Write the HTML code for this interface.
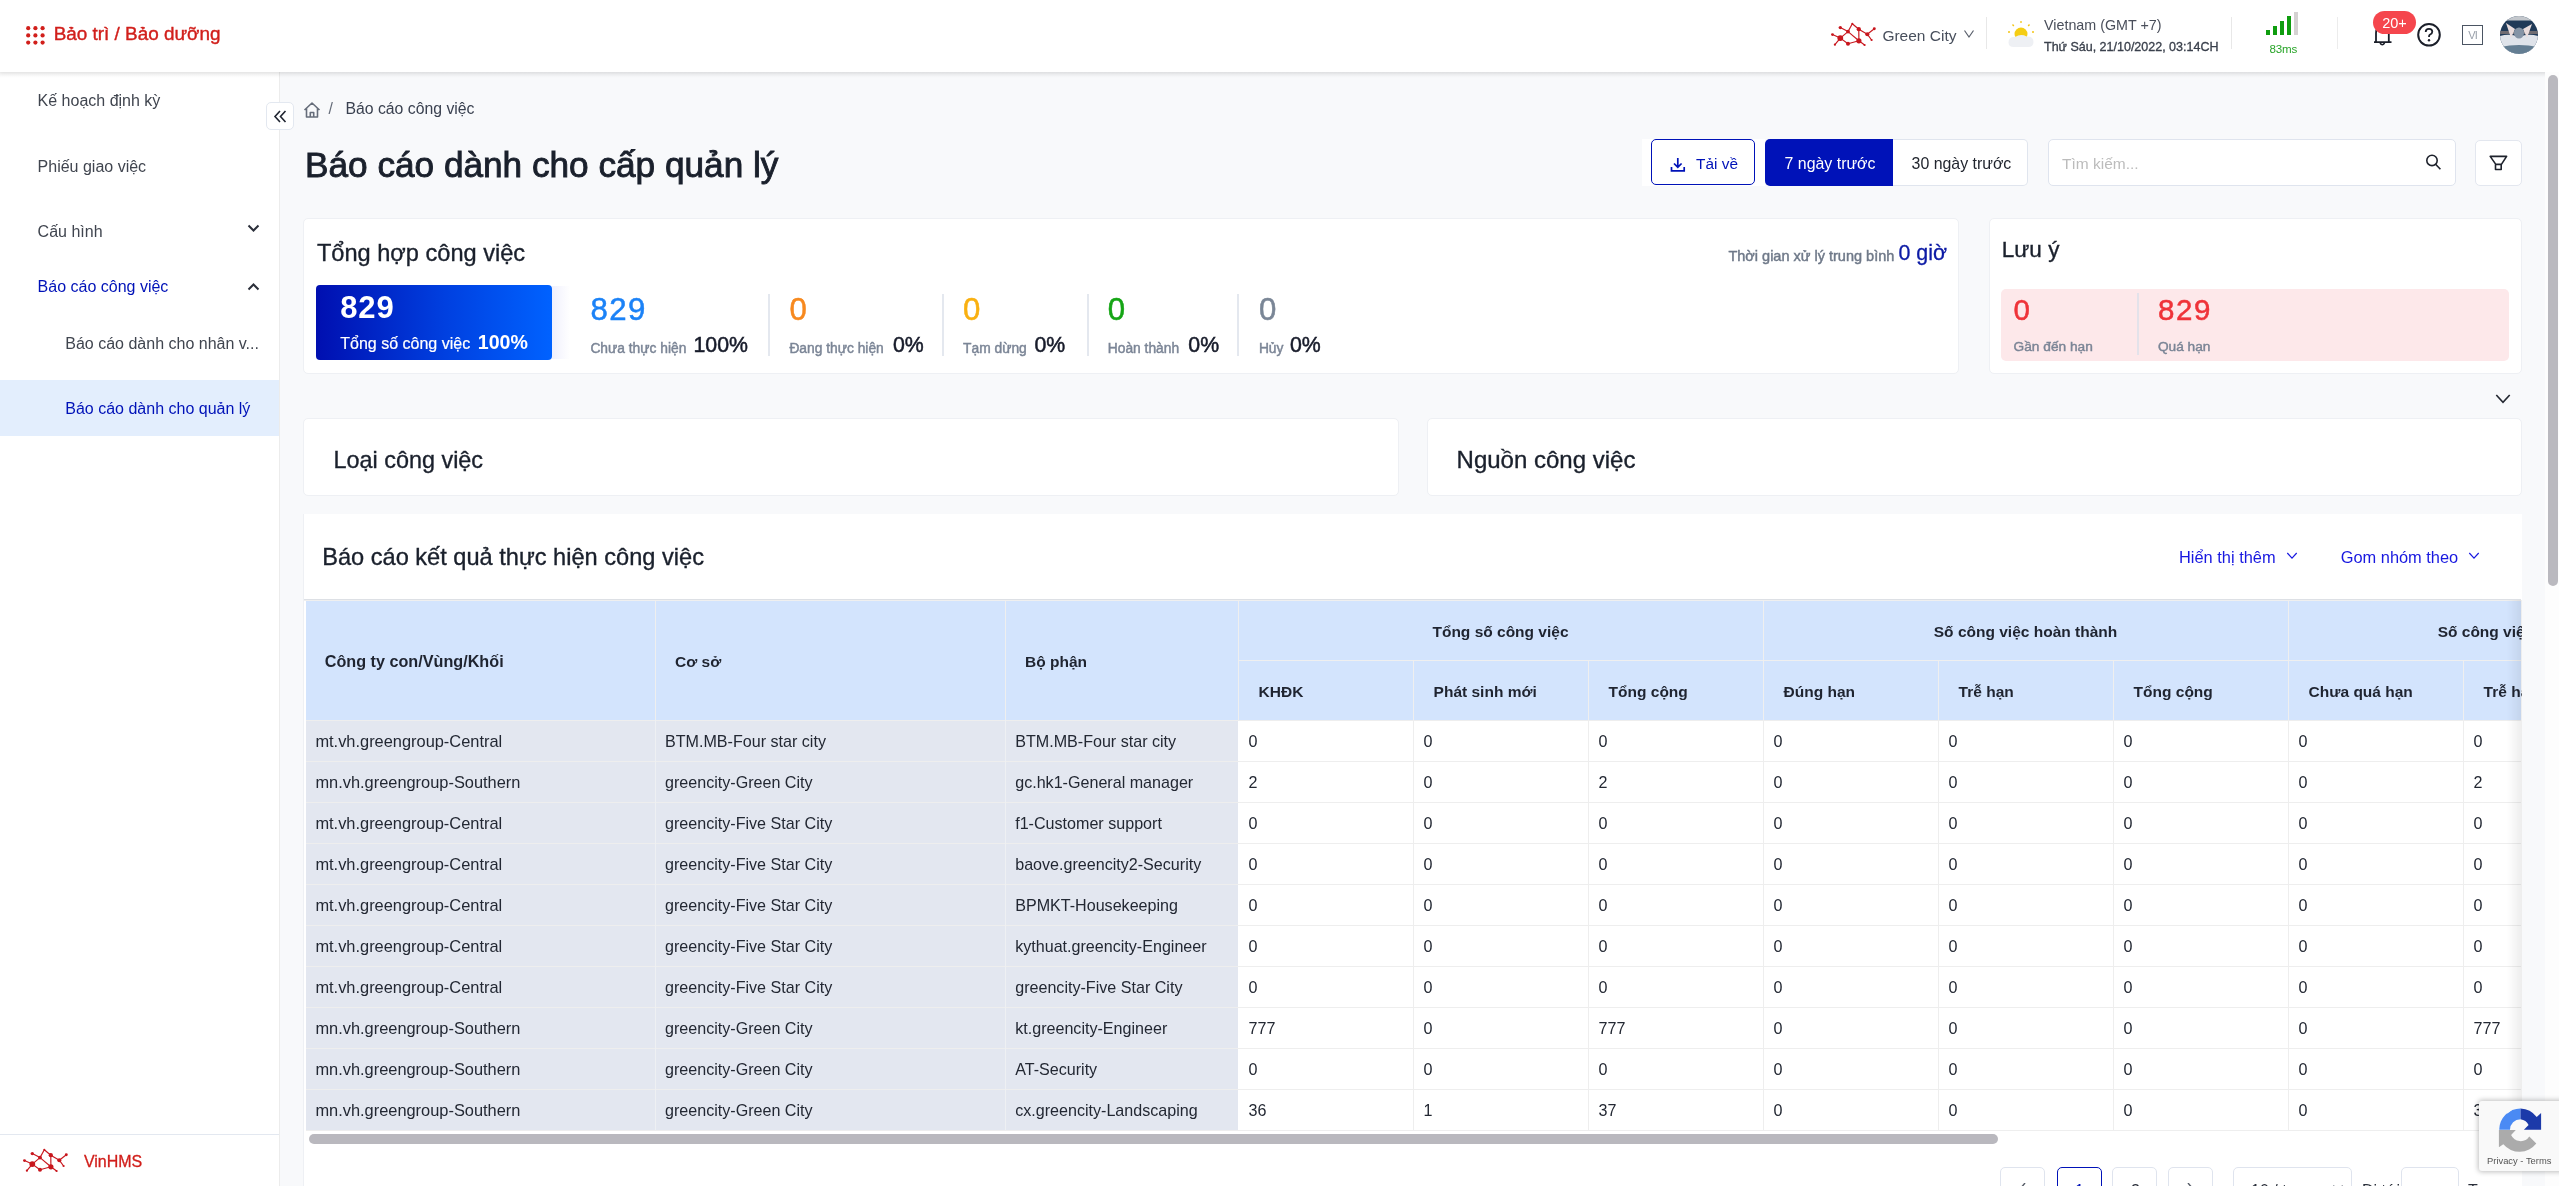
<!DOCTYPE html>
<html><head><meta charset="utf-8"><title>Báo cáo dành cho cấp quản lý</title>
<style>
html,body{margin:0;padding:0;width:2559px;height:1186px;overflow:hidden;background:#fff;font-family:"Liberation Sans",sans-serif;}
#root{position:absolute;left:0;top:0;width:2559px;height:1186px;overflow:hidden;will-change:transform}
.r{position:absolute;box-sizing:content-box}
.t{position:absolute;line-height:1;white-space:nowrap}
</style></head><body>
<div id="root">
<div class="r" style="left:280px;top:72px;width:2265px;height:1114px;background:#f8f9fb"></div>
<div class="r" style="left:0px;top:72px;width:279px;height:1114px;background:#fff"></div>
<div class="r" style="left:279px;top:72px;width:1px;height:1114px;background:#ececec"></div>
<div class="r" style="left:0px;top:380px;width:279px;height:56px;background:#e3eefd"></div>
<div class="t" style="left:37.6px;top:92.5px;font-size:16px;color:#40454f;font-weight:400;">Kế hoạch định kỳ</div>
<div class="t" style="left:37.6px;top:158.5px;font-size:16px;color:#40454f;font-weight:400;">Phiếu giao việc</div>
<div class="t" style="left:37.6px;top:224.0px;font-size:16px;color:#40454f;font-weight:400;">Cấu hình</div>
<div class="t" style="left:37.6px;top:279.3px;font-size:16px;color:#0012b8;font-weight:400;">Báo cáo công việc</div>
<div class="t" style="left:65.3px;top:335.8px;font-size:16px;color:#40454f;font-weight:400;">Báo cáo dành cho nhân v...</div>
<div class="t" style="left:65.3px;top:400.9px;font-size:16px;color:#0012b8;font-weight:400;">Báo cáo dành cho quản lý</div>
<svg class="r" style="left:247px;top:223px" width="13" height="11" viewBox="0 0 13 11"><path d="M1.5 2.5 L6.5 7.5 L11.5 2.5" fill="none" stroke="#2b2f3a" stroke-width="2"/></svg>
<svg class="r" style="left:247px;top:281px" width="13" height="11" viewBox="0 0 13 11"><path d="M1.5 8.5 L6.5 3.5 L11.5 8.5" fill="none" stroke="#2b2f3a" stroke-width="2"/></svg>
<div class="r" style="left:0px;top:1134px;width:279px;height:1px;background:#e3e8f0"></div>
<svg class="r" style="left:17.9px;top:1144.4px" width="54" height="32" viewBox="0 0 54 32"><line x1="14.3" y1="9.6" x2="22" y2="13.6" stroke="#c8161d" stroke-width="1.15"/><line x1="22" y1="13.6" x2="26.3" y2="5.8" stroke="#c8161d" stroke-width="1.15"/><line x1="26.3" y1="5.8" x2="32.8" y2="11.2" stroke="#c8161d" stroke-width="1.15"/><line x1="32.8" y1="11.2" x2="41.3" y2="16.2" stroke="#c8161d" stroke-width="1.15"/><line x1="41.3" y1="16.2" x2="48.3" y2="10.8" stroke="#c8161d" stroke-width="1.15"/><line x1="41.3" y1="16.2" x2="45.6" y2="22" stroke="#c8161d" stroke-width="1.15"/><line x1="32.8" y1="11.2" x2="32.9" y2="22.8" stroke="#c8161d" stroke-width="1.15"/><line x1="22" y1="13.6" x2="32.9" y2="22.8" stroke="#c8161d" stroke-width="1.15"/><line x1="22" y1="13.6" x2="14.3" y2="20.1" stroke="#c8161d" stroke-width="1.15"/><line x1="6.5" y1="16.6" x2="14.3" y2="20.1" stroke="#c8161d" stroke-width="1.15"/><line x1="14.3" y1="20.1" x2="8.9" y2="26.7" stroke="#c8161d" stroke-width="1.15"/><line x1="14.3" y1="20.1" x2="22" y2="25.8" stroke="#c8161d" stroke-width="1.15"/><line x1="22" y1="25.8" x2="32.9" y2="22.8" stroke="#c8161d" stroke-width="1.15"/><line x1="32.9" y1="22.8" x2="38.6" y2="27" stroke="#c8161d" stroke-width="1.15"/><circle cx="14.3" cy="9.6" r="1.68" fill="#c8161d"/><circle cx="22" cy="13.6" r="1.90" fill="#c8161d"/><circle cx="26.3" cy="5.8" r="1.01" fill="#c8161d"/><circle cx="32.8" cy="11.2" r="2.13" fill="#c8161d"/><circle cx="48.3" cy="10.8" r="1.46" fill="#c8161d"/><circle cx="41.3" cy="16.2" r="2.02" fill="#c8161d"/><circle cx="45.6" cy="22" r="1.12" fill="#c8161d"/><circle cx="6.5" cy="16.6" r="1.46" fill="#c8161d"/><circle cx="14.3" cy="20.1" r="2.91" fill="#c8161d"/><circle cx="8.9" cy="26.7" r="1.12" fill="#c8161d"/><circle cx="22" cy="25.8" r="2.02" fill="#c8161d"/><circle cx="32.9" cy="22.8" r="2.58" fill="#c8161d"/><circle cx="38.6" cy="27" r="1.12" fill="#c8161d"/></svg>
<div class="t" style="left:83.9px;top:1154.1px;font-size:16px;color:#d11f1b;font-weight:400;-webkit-text-stroke:0.3px #d11f1b;">VinHMS</div>
<div class="r" style="left:266px;top:102px;width:26px;height:26px;background:#fff;border:1px solid #e3e8f0;border-radius:5px"></div>
<svg class="r" style="left:266px;top:102px" width="28" height="28" viewBox="0 0 28 28"><path d="M14 9 L9 14.5 L14 20 M19.5 9 L14.5 14.5 L19.5 20" fill="none" stroke="#1f2430" stroke-width="1.6"/></svg>
<div class="r" style="left:0px;top:0px;width:2559px;height:72px;background:#fff;box-shadow:0 1px 4px rgba(0,0,0,0.08)"></div>
<div class="r" style="left:0;top:72px;width:2559px;height:6px;background:linear-gradient(rgba(0,0,0,0.06),rgba(0,0,0,0))"></div>
<svg class="r" style="left:0;top:0" width="60" height="60"><circle cx="28.2" cy="28.2" r="2.1" fill="#d11f1b"/><circle cx="35.4" cy="28.2" r="2.1" fill="#d11f1b"/><circle cx="42.6" cy="28.2" r="2.1" fill="#d11f1b"/><circle cx="28.2" cy="35.4" r="2.1" fill="#d11f1b"/><circle cx="35.4" cy="35.4" r="2.1" fill="#d11f1b"/><circle cx="42.6" cy="35.4" r="2.1" fill="#d11f1b"/><circle cx="28.2" cy="42.6" r="2.1" fill="#d11f1b"/><circle cx="35.4" cy="42.6" r="2.1" fill="#d11f1b"/><circle cx="42.6" cy="42.6" r="2.1" fill="#d11f1b"/></svg>
<div class="t" style="left:53.7px;top:25.3px;font-size:18.9px;color:#d11f1b;font-weight:400;-webkit-text-stroke:0.4px #d11f1b;">Bảo trì / Bảo dưỡng</div>
<svg class="r" style="left:1826px;top:18px" width="54" height="32" viewBox="0 0 54 32"><line x1="14.3" y1="9.6" x2="22" y2="13.6" stroke="#c8161d" stroke-width="1.15"/><line x1="22" y1="13.6" x2="26.3" y2="5.8" stroke="#c8161d" stroke-width="1.15"/><line x1="26.3" y1="5.8" x2="32.8" y2="11.2" stroke="#c8161d" stroke-width="1.15"/><line x1="32.8" y1="11.2" x2="41.3" y2="16.2" stroke="#c8161d" stroke-width="1.15"/><line x1="41.3" y1="16.2" x2="48.3" y2="10.8" stroke="#c8161d" stroke-width="1.15"/><line x1="41.3" y1="16.2" x2="45.6" y2="22" stroke="#c8161d" stroke-width="1.15"/><line x1="32.8" y1="11.2" x2="32.9" y2="22.8" stroke="#c8161d" stroke-width="1.15"/><line x1="22" y1="13.6" x2="32.9" y2="22.8" stroke="#c8161d" stroke-width="1.15"/><line x1="22" y1="13.6" x2="14.3" y2="20.1" stroke="#c8161d" stroke-width="1.15"/><line x1="6.5" y1="16.6" x2="14.3" y2="20.1" stroke="#c8161d" stroke-width="1.15"/><line x1="14.3" y1="20.1" x2="8.9" y2="26.7" stroke="#c8161d" stroke-width="1.15"/><line x1="14.3" y1="20.1" x2="22" y2="25.8" stroke="#c8161d" stroke-width="1.15"/><line x1="22" y1="25.8" x2="32.9" y2="22.8" stroke="#c8161d" stroke-width="1.15"/><line x1="32.9" y1="22.8" x2="38.6" y2="27" stroke="#c8161d" stroke-width="1.15"/><circle cx="14.3" cy="9.6" r="1.68" fill="#c8161d"/><circle cx="22" cy="13.6" r="1.90" fill="#c8161d"/><circle cx="26.3" cy="5.8" r="1.01" fill="#c8161d"/><circle cx="32.8" cy="11.2" r="2.13" fill="#c8161d"/><circle cx="48.3" cy="10.8" r="1.46" fill="#c8161d"/><circle cx="41.3" cy="16.2" r="2.02" fill="#c8161d"/><circle cx="45.6" cy="22" r="1.12" fill="#c8161d"/><circle cx="6.5" cy="16.6" r="1.46" fill="#c8161d"/><circle cx="14.3" cy="20.1" r="2.91" fill="#c8161d"/><circle cx="8.9" cy="26.7" r="1.12" fill="#c8161d"/><circle cx="22" cy="25.8" r="2.02" fill="#c8161d"/><circle cx="32.9" cy="22.8" r="2.58" fill="#c8161d"/><circle cx="38.6" cy="27" r="1.12" fill="#c8161d"/></svg>
<div class="t" style="left:1882.4px;top:27.7px;font-size:15.5px;color:#484f5c;font-weight:400;">Green City</div>
<svg class="r" style="left:1963px;top:29px" width="12" height="10" viewBox="0 0 12 10"><path d="M1.5 1.5 L6 8 L10.5 1.5" fill="none" stroke="#5a606c" stroke-width="1.2"/></svg>
<div class="r" style="left:1986px;top:17px;width:1px;height:32px;background:#e8e8e8"></div>
<svg class="r" style="left:2006px;top:19px" width="30" height="30" viewBox="0 0 30 30"><g stroke="#f3c515" stroke-width="1.3"><line x1="15" y1="2" x2="15" y2="4"/><line x1="6.5" y1="5.5" x2="7.8" y2="7"/><line x1="23.5" y1="5.5" x2="22.2" y2="7"/><line x1="2" y1="13" x2="4" y2="13"/><line x1="26" y1="13" x2="28" y2="13"/></g><circle cx="15" cy="15" r="6.5" fill="#f5cd14"/><path d="M2.5 23.5 Q2.5 17.5 9 18 Q15 14.5 20.5 17.5 Q27.5 17 27.5 23 Q27.5 28 22 28 L8 28 Q2.5 28 2.5 23.5 Z" fill="#eef0f4"/></svg>
<div class="t" style="left:2044.0px;top:17.9px;font-size:14.3px;color:#4a4f5b;font-weight:400;">Vietnam (GMT +7)</div>
<div class="t" style="left:2044.0px;top:40.7px;font-size:12.5px;color:#3a404c;font-weight:400;-webkit-text-stroke:0.32px #3a404c;">Thứ Sáu, 21/10/2022, 03:14CH</div>
<div class="r" style="left:2231px;top:17px;width:1px;height:32px;background:#e8e8e8"></div>
<div class="r" style="left:2266px;top:29.8px;width:4px;height:4.900000000000002px;background:#0f9d0f"></div>
<div class="r" style="left:2273px;top:25.7px;width:4px;height:9.000000000000004px;background:#0f9d0f"></div>
<div class="r" style="left:2280px;top:20.8px;width:4px;height:13.900000000000002px;background:#0f9d0f"></div>
<div class="r" style="left:2287.2px;top:15.8px;width:4px;height:18.900000000000002px;background:#0f9d0f"></div>
<div class="r" style="left:2294.3px;top:12px;width:3.6px;height:22.7px;background:#d5d2d2"></div>
<div class="t" style="left:2269.5px;top:42.9px;font-size:11.6px;color:#2aa52a;font-weight:400;letter-spacing:-0.2px">83ms</div>
<div class="r" style="left:2337px;top:17px;width:1px;height:32px;background:#ececec"></div>
<svg class="r" style="left:2372px;top:22px" width="22" height="26" viewBox="0 0 22 26"><path d="M4 20 L4 11 Q4 4 10.5 4 Q16.8 4 16.8 11 L16.8 20 M2 20.2 L19.5 20.2" fill="none" stroke="#1b1f2a" stroke-width="1.8"/><path d="M8 21 Q10.3 24.5 12.6 21" fill="none" stroke="#1b1f2a" stroke-width="1.5"/></svg>
<div class="r" style="left:2373px;top:11px;width:43px;height:23px;background:#f5464d;border-radius:12px;color:#fff;font-size:14.5px;line-height:25px;text-align:center">20+</div>
<svg class="r" style="left:2416px;top:22px" width="26" height="26" viewBox="0 0 26 26"><circle cx="13" cy="12.8" r="10.8" fill="none" stroke="#1b1f2a" stroke-width="2"/><path d="M9.7 10 Q9.7 6.8 13 6.8 Q16.3 6.8 16.3 9.8 Q16.3 11.6 13.8 12.8 Q13 13.3 13 15" fill="none" stroke="#1b1f2a" stroke-width="1.8"/><circle cx="13" cy="18.3" r="1.2" fill="#1b1f2a"/></svg>
<div class="r" style="left:2462px;top:25px;width:19px;height:18px;border:1px solid #4b5563;color:#9aa1ab;font-size:11px;line-height:18px;text-align:center;letter-spacing:-1px">VI</div>
<svg class="r" style="left:2500px;top:15.5px" width="38" height="38" viewBox="0 0 38 38"><defs><clipPath id="av"><circle cx="19" cy="19" r="19"/></clipPath></defs><g clip-path="url(#av)"><rect width="38" height="38" fill="#203a58"/><rect width="38" height="4.5" fill="#c3c7cc"/><rect y="15" width="38" height="3" fill="#6f6c72"/><path d="M0 20 Q10 17 19 21 Q28 17 38 20 L38 38 L0 38 Z" fill="#dfe3ea"/><path d="M6 7 L15 13 L11 22 Z" fill="#e9dcdc"/><path d="M32 8 L23 13 L27 22 Z" fill="#e9dcdc"/><ellipse cx="19" cy="17" rx="5" ry="5.5" fill="#8494a6"/><path d="M0 31 Q19 27 38 31 L38 38 L0 38 Z" fill="#647e93"/></g></svg>
<svg class="r" style="left:302px;top:100px" width="20" height="20" viewBox="0 0 20 20"><path d="M2.5 10 L10 3 L17.5 10 M4.5 8.3 L4.5 17 L15.5 17 L15.5 8.3 M8.3 17 L8.3 12.5 L11.7 12.5 L11.7 17" fill="none" stroke="#666d7a" stroke-width="1.6" stroke-linejoin="round"/></svg>
<div class="t" style="left:328.5px;top:100.9px;font-size:15.8px;color:#666d7a;font-weight:400;">/</div>
<div class="t" style="left:345.4px;top:100.9px;font-size:15.8px;color:#3a4150;font-weight:400;">Báo cáo công việc</div>
<div class="t" style="left:305.0px;top:147.4px;font-size:35.2px;color:#1a202c;font-weight:400;-webkit-text-stroke:0.9px #1a202c;">Báo cáo dành cho cấp quản lý</div>
<div class="r" style="left:1642px;top:139px;width:123px;height:47px;background:#fff"></div>
<div class="r" style="left:1651px;top:139px;width:101.5px;height:43.5px;border:1.5px solid #0012b8;border-radius:5px;background:#fff"></div>
<svg class="r" style="left:1669px;top:156px" width="18" height="18" viewBox="0 0 18 18"><path d="M8.8 2 L8.8 11 M5 7.5 L8.8 11.2 L12.6 7.5 M2.5 11 L2.5 14.8 L15.2 14.8 L15.2 11" fill="none" stroke="#0012b8" stroke-width="1.7"/></svg>
<div class="t" style="left:1696.1px;top:156.3px;font-size:15.4px;color:#0012b8;font-weight:400;">Tải về</div>
<div class="r" style="left:1765px;top:139px;width:128px;height:47px;background:#0012b8;border-radius:5px 0 0 5px"></div>
<div class="t" style="left:1784.6px;top:156.0px;font-size:15.9px;color:#fff;font-weight:400;">7 ngày trước</div>
<div class="r" style="left:1893px;top:139px;width:134px;height:45px;background:#fff;border:1px solid #e0e5ee;border-left:none;border-radius:0 5px 5px 0"></div>
<div class="t" style="left:1911.6px;top:156.0px;font-size:15.9px;color:#22262f;font-weight:400;">30 ngày trước</div>
<div class="r" style="left:2048px;top:139px;width:406px;height:45px;background:#fff;border:1px solid #dfe4ee;border-radius:5px"></div>
<div class="t" style="left:2062.0px;top:156.1px;font-size:15.5px;color:#bcbcbc;font-weight:400;">Tìm kiếm...</div>
<svg class="r" style="left:2424px;top:153px" width="20" height="20" viewBox="0 0 20 20"><circle cx="8" cy="7.4" r="5.2" fill="none" stroke="#1e222c" stroke-width="1.6"/><path d="M11.6 11.2 L16.4 16.3" stroke="#1e222c" stroke-width="1.6"/></svg>
<div class="r" style="left:2475px;top:140px;width:45px;height:44px;background:#fff;border:1px solid #e3e7ef;border-radius:5px"></div>
<svg class="r" style="left:2488px;top:153px" width="22" height="20" viewBox="0 0 22 20"><path d="M2.2 3.4 L18.6 3.4 L13.4 11.4 L7.8 11.4 Z M7.5 11.4 L7.5 16.5 L13.2 16.5 L13.2 11.4" fill="none" stroke="#1e222c" stroke-width="1.6" stroke-linejoin="round"/></svg>
<div class="r" style="left:303px;top:218px;width:1654px;height:154px;background:#fff;border:1px solid #eef0f4;border-radius:5px"></div>
<div class="t" style="left:316.9px;top:242.2px;font-size:23.6px;color:#1a202c;font-weight:400;-webkit-text-stroke:0.35px #1a202c;">Tổng hợp công việc</div>
<div class="t" style="left:1728.4px;top:248.7px;font-size:14.5px;color:#6f7989;font-weight:400;-webkit-text-stroke:0.45px #6f7989;">Thời gian xử lý trung bình</div>
<div class="t" style="left:1898.5px;top:242.9px;font-size:21.4px;color:#0c1aa5;font-weight:400;-webkit-text-stroke:0.3px #0c1aa5;">0 giờ</div>
<div class="r" style="left:316px;top:285px;width:236px;height:75px;border-radius:4px;background:linear-gradient(90deg,#000fb0 0%,#0040e0 55%,#0062ff 100%)"></div>
<div class="r" style="left:552px;top:286px;width:18px;height:73px;background:linear-gradient(90deg,rgba(90,90,230,0.09),rgba(90,90,230,0))"></div>
<div class="t" style="left:340.3px;top:291.6px;font-size:31px;color:#fff;font-weight:700;letter-spacing:0.8px">829</div>
<div class="t" style="left:340.3px;top:336.2px;font-size:16px;color:#fff;font-weight:400;-webkit-text-stroke:0.2px #fff;">Tổng số công việc</div>
<div class="t" style="left:477.8px;top:333.1px;font-size:19.6px;color:#fff;font-weight:700;">100%</div>
<div class="t" style="left:590.4px;top:293.9px;font-size:31.2px;color:#1b82f7;font-weight:400;-webkit-text-stroke:0.5px #1b82f7;letter-spacing:1.5px">829</div>
<div class="t" style="left:590.4px;top:341.8px;font-size:13.8px;color:#7b8596;font-weight:400;-webkit-text-stroke:0.45px #7b8596;">Chưa thực hiện</div>
<div class="t" style="left:693.5px;top:334.5px;font-size:21.3px;color:#171b2a;font-weight:400;-webkit-text-stroke:0.5px #171b2a;">100%</div>
<div class="t" style="left:789.4px;top:293.9px;font-size:31.2px;color:#f7891e;font-weight:400;-webkit-text-stroke:0.5px #f7891e;letter-spacing:1.5px">0</div>
<div class="t" style="left:789.4px;top:341.8px;font-size:13.8px;color:#7b8596;font-weight:400;-webkit-text-stroke:0.45px #7b8596;">Đang thực hiện</div>
<div class="t" style="left:893.0px;top:334.5px;font-size:21.3px;color:#171b2a;font-weight:400;-webkit-text-stroke:0.5px #171b2a;">0%</div>
<div class="t" style="left:963.1px;top:293.9px;font-size:31.2px;color:#f9b010;font-weight:400;-webkit-text-stroke:0.5px #f9b010;letter-spacing:1.5px">0</div>
<div class="t" style="left:963.1px;top:341.8px;font-size:13.8px;color:#7b8596;font-weight:400;-webkit-text-stroke:0.45px #7b8596;">Tạm dừng</div>
<div class="t" style="left:1034.5px;top:334.5px;font-size:21.3px;color:#171b2a;font-weight:400;-webkit-text-stroke:0.5px #171b2a;">0%</div>
<div class="t" style="left:1107.8px;top:293.9px;font-size:31.2px;color:#15a515;font-weight:400;-webkit-text-stroke:0.5px #15a515;letter-spacing:1.5px">0</div>
<div class="t" style="left:1107.8px;top:341.8px;font-size:13.8px;color:#7b8596;font-weight:400;-webkit-text-stroke:0.45px #7b8596;">Hoàn thành</div>
<div class="t" style="left:1188.3px;top:334.5px;font-size:21.3px;color:#171b2a;font-weight:400;-webkit-text-stroke:0.5px #171b2a;">0%</div>
<div class="t" style="left:1258.9px;top:293.9px;font-size:31.2px;color:#7a8696;font-weight:400;-webkit-text-stroke:0.5px #7a8696;letter-spacing:1.5px">0</div>
<div class="t" style="left:1258.9px;top:341.8px;font-size:13.8px;color:#7b8596;font-weight:400;-webkit-text-stroke:0.45px #7b8596;">Hủy</div>
<div class="t" style="left:1290.0px;top:334.5px;font-size:21.3px;color:#171b2a;font-weight:400;-webkit-text-stroke:0.5px #171b2a;">0%</div>
<div class="r" style="left:768px;top:294px;width:2px;height:62px;background:#e4e8ef"></div>
<div class="r" style="left:942px;top:294px;width:2px;height:62px;background:#e4e8ef"></div>
<div class="r" style="left:1087px;top:294px;width:2px;height:62px;background:#e4e8ef"></div>
<div class="r" style="left:1237px;top:294px;width:2px;height:62px;background:#e4e8ef"></div>
<div class="r" style="left:1989px;top:218px;width:531px;height:154px;background:#fff;border:1px solid #eef0f4;border-radius:5px"></div>
<div class="t" style="left:2001.8px;top:239.4px;font-size:22.5px;color:#1a202c;font-weight:400;-webkit-text-stroke:0.35px #1a202c;">Lưu ý</div>
<div class="r" style="left:2001px;top:289px;width:508px;height:72px;background:#fde8ea;border-radius:5px"></div>
<div class="t" style="left:2013.6px;top:295.3px;font-size:29.5px;color:#ef3339;font-weight:400;-webkit-text-stroke:0.5px #ef3339;">0</div>
<div class="t" style="left:2157.9px;top:295.3px;font-size:29.5px;color:#ef3339;font-weight:400;-webkit-text-stroke:0.5px #ef3339;letter-spacing:1.7px">829</div>
<div class="t" style="left:2013.6px;top:339.5px;font-size:13.7px;color:#7b8596;font-weight:400;-webkit-text-stroke:0.45px #7b8596;">Gần đến hạn</div>
<div class="t" style="left:2157.9px;top:339.5px;font-size:13.7px;color:#7b8596;font-weight:400;-webkit-text-stroke:0.45px #7b8596;">Quá hạn</div>
<div class="r" style="left:2137px;top:293px;width:2px;height:62px;background:#e3e2ea"></div>
<svg class="r" style="left:2494px;top:392px" width="18" height="14" viewBox="0 0 18 14"><path d="M2.3 3 L9 10.3 L15.7 3" fill="none" stroke="#222630" stroke-width="1.6"/></svg>
<div class="r" style="left:303px;top:418px;width:1094px;height:76px;background:#fff;border:1px solid #eef0f4;border-radius:5px"></div>
<div class="t" style="left:333.5px;top:448.8px;font-size:23.4px;color:#1a202c;font-weight:400;-webkit-text-stroke:0.35px #1a202c;">Loại công việc</div>
<div class="r" style="left:1427px;top:418px;width:1093px;height:76px;background:#fff;border:1px solid #eef0f4;border-radius:5px"></div>
<div class="t" style="left:1456.6px;top:448.3px;font-size:24px;color:#1a202c;font-weight:400;-webkit-text-stroke:0.35px #1a202c;">Nguồn công việc</div>
<div class="r" style="left:303px;top:514px;width:2218px;height:700px;background:#fff;border-left:1px solid #eef0f4"></div>
<div class="t" style="left:322.2px;top:546.4px;font-size:23.6px;color:#1a202c;font-weight:400;-webkit-text-stroke:0.35px #1a202c;">Báo cáo kết quả thực hiện công việc</div>
<div class="t" style="left:2179.0px;top:549.1px;font-size:16.4px;color:#1818e0;font-weight:400;">Hiển thị thêm</div>
<svg class="r" style="left:2285px;top:550px" width="14" height="12" viewBox="0 0 14 12"><path d="M2.3 3 L7 8.2 L11.7 3" fill="none" stroke="#1818e0" stroke-width="1.2"/></svg>
<div class="t" style="left:2340.7px;top:549.1px;font-size:16.4px;color:#1818e0;font-weight:400;">Gom nhóm theo</div>
<svg class="r" style="left:2467px;top:550px" width="14" height="12" viewBox="0 0 14 12"><path d="M2.3 3 L7 8.2 L11.7 3" fill="none" stroke="#1818e0" stroke-width="1.2"/></svg>
<div class="r" style="left:304px;top:599px;width:2217px;height:1px;background:#dde0e5"></div>
<div class="r" style="left:304px;top:600px;width:2217px;height:1px;background:#efefef"></div>
<div class="r" style="left:306px;top:601px;width:2215px;height:119px;background:#d3e4fd"></div>
<div class="r" style="left:655px;top:600px;width:1px;height:120px;background:#efefef"></div>
<div class="r" style="left:1005px;top:600px;width:1px;height:120px;background:#efefef"></div>
<div class="r" style="left:1238px;top:600px;width:1px;height:120px;background:#efefef"></div>
<div class="r" style="left:1763px;top:600px;width:1px;height:120px;background:#efefef"></div>
<div class="r" style="left:2288px;top:600px;width:1px;height:120px;background:#efefef"></div>
<div class="r" style="left:1413px;top:660px;width:1px;height:60px;background:#efefef"></div>
<div class="r" style="left:1588px;top:660px;width:1px;height:60px;background:#efefef"></div>
<div class="r" style="left:1938px;top:660px;width:1px;height:60px;background:#efefef"></div>
<div class="r" style="left:2113px;top:660px;width:1px;height:60px;background:#efefef"></div>
<div class="r" style="left:2463px;top:660px;width:1px;height:60px;background:#efefef"></div>
<div class="r" style="left:1238px;top:660px;width:1283px;height:1px;background:#efefef"></div>
<div class="t" style="left:324.7px;top:653.3px;font-size:16.2px;color:#1f2430;font-weight:700;">Công ty con/Vùng/Khối</div>
<div class="t" style="left:675.0px;top:653.9px;font-size:15.5px;color:#1f2430;font-weight:700;">Cơ sở</div>
<div class="t" style="left:1025.0px;top:653.9px;font-size:15.5px;color:#1f2430;font-weight:700;">Bộ phận</div>
<div class="t" style="left:1200.5px;width:600px;text-align:center;top:624.1px;font-size:15.5px;color:#1f2430;font-weight:700;">Tổng số công việc</div>
<div class="t" style="left:1725.5px;width:600px;text-align:center;top:624.1px;font-size:15.5px;color:#1f2430;font-weight:700;">Số công việc hoàn thành</div>
<div class="t" style="left:2250.5px;width:600px;text-align:center;top:624.1px;font-size:15.5px;color:#1f2430;font-weight:700;">Số công việc chưa hoàn thành</div>
<div class="t" style="left:1258.6px;top:683.9px;font-size:15.5px;color:#1f2430;font-weight:700;">KHĐK</div>
<div class="t" style="left:1433.6px;top:683.9px;font-size:15.5px;color:#1f2430;font-weight:700;">Phát sinh mới</div>
<div class="t" style="left:1608.6px;top:683.9px;font-size:15.5px;color:#1f2430;font-weight:700;">Tổng cộng</div>
<div class="t" style="left:1783.6px;top:683.9px;font-size:15.5px;color:#1f2430;font-weight:700;">Đúng hạn</div>
<div class="t" style="left:1958.6px;top:683.9px;font-size:15.5px;color:#1f2430;font-weight:700;">Trễ hạn</div>
<div class="t" style="left:2133.6px;top:683.9px;font-size:15.5px;color:#1f2430;font-weight:700;">Tổng cộng</div>
<div class="t" style="left:2308.6px;top:683.9px;font-size:15.5px;color:#1f2430;font-weight:700;">Chưa quá hạn</div>
<div class="t" style="left:2483.6px;top:683.9px;font-size:15.5px;color:#1f2430;font-weight:700;">Trễ hạn</div>
<div class="r" style="left:306px;top:720px;width:932px;height:41px;background:#e3e7f0"></div>
<div class="r" style="left:306px;top:720px;width:2215px;height:1px;background:#eeeeee"></div>
<div class="t" style="left:315.4px;top:732.9px;font-size:16.4px;color:#232833;font-weight:400;">mt.vh.greengroup-Central</div>
<div class="t" style="left:665.0px;top:733.2px;font-size:16.1px;color:#232833;font-weight:400;">BTM.MB-Four star city</div>
<div class="t" style="left:1015.2px;top:733.2px;font-size:16.1px;color:#232833;font-weight:400;">BTM.MB-Four star city</div>
<div class="t" style="left:1248.5px;top:733.2px;font-size:16.1px;color:#232833;font-weight:400;">0</div>
<div class="t" style="left:1423.5px;top:733.2px;font-size:16.1px;color:#232833;font-weight:400;">0</div>
<div class="t" style="left:1598.5px;top:733.2px;font-size:16.1px;color:#232833;font-weight:400;">0</div>
<div class="t" style="left:1773.5px;top:733.2px;font-size:16.1px;color:#232833;font-weight:400;">0</div>
<div class="t" style="left:1948.5px;top:733.2px;font-size:16.1px;color:#232833;font-weight:400;">0</div>
<div class="t" style="left:2123.5px;top:733.2px;font-size:16.1px;color:#232833;font-weight:400;">0</div>
<div class="t" style="left:2298.5px;top:733.2px;font-size:16.1px;color:#232833;font-weight:400;">0</div>
<div class="t" style="left:2473.5px;top:733.2px;font-size:16.1px;color:#232833;font-weight:400;">0</div>
<div class="r" style="left:306px;top:761px;width:932px;height:41px;background:#e3e7f0"></div>
<div class="r" style="left:306px;top:761px;width:2215px;height:1px;background:#eeeeee"></div>
<div class="t" style="left:315.4px;top:773.9px;font-size:16.4px;color:#232833;font-weight:400;">mn.vh.greengroup-Southern</div>
<div class="t" style="left:665.0px;top:774.2px;font-size:16.1px;color:#232833;font-weight:400;">greencity-Green City</div>
<div class="t" style="left:1015.2px;top:774.2px;font-size:16.1px;color:#232833;font-weight:400;">gc.hk1-General manager</div>
<div class="t" style="left:1248.5px;top:774.2px;font-size:16.1px;color:#232833;font-weight:400;">2</div>
<div class="t" style="left:1423.5px;top:774.2px;font-size:16.1px;color:#232833;font-weight:400;">0</div>
<div class="t" style="left:1598.5px;top:774.2px;font-size:16.1px;color:#232833;font-weight:400;">2</div>
<div class="t" style="left:1773.5px;top:774.2px;font-size:16.1px;color:#232833;font-weight:400;">0</div>
<div class="t" style="left:1948.5px;top:774.2px;font-size:16.1px;color:#232833;font-weight:400;">0</div>
<div class="t" style="left:2123.5px;top:774.2px;font-size:16.1px;color:#232833;font-weight:400;">0</div>
<div class="t" style="left:2298.5px;top:774.2px;font-size:16.1px;color:#232833;font-weight:400;">0</div>
<div class="t" style="left:2473.5px;top:774.2px;font-size:16.1px;color:#232833;font-weight:400;">2</div>
<div class="r" style="left:306px;top:802px;width:932px;height:41px;background:#e3e7f0"></div>
<div class="r" style="left:306px;top:802px;width:2215px;height:1px;background:#eeeeee"></div>
<div class="t" style="left:315.4px;top:814.9px;font-size:16.4px;color:#232833;font-weight:400;">mt.vh.greengroup-Central</div>
<div class="t" style="left:665.0px;top:815.2px;font-size:16.1px;color:#232833;font-weight:400;">greencity-Five Star City</div>
<div class="t" style="left:1015.2px;top:815.2px;font-size:16.1px;color:#232833;font-weight:400;">f1-Customer support</div>
<div class="t" style="left:1248.5px;top:815.2px;font-size:16.1px;color:#232833;font-weight:400;">0</div>
<div class="t" style="left:1423.5px;top:815.2px;font-size:16.1px;color:#232833;font-weight:400;">0</div>
<div class="t" style="left:1598.5px;top:815.2px;font-size:16.1px;color:#232833;font-weight:400;">0</div>
<div class="t" style="left:1773.5px;top:815.2px;font-size:16.1px;color:#232833;font-weight:400;">0</div>
<div class="t" style="left:1948.5px;top:815.2px;font-size:16.1px;color:#232833;font-weight:400;">0</div>
<div class="t" style="left:2123.5px;top:815.2px;font-size:16.1px;color:#232833;font-weight:400;">0</div>
<div class="t" style="left:2298.5px;top:815.2px;font-size:16.1px;color:#232833;font-weight:400;">0</div>
<div class="t" style="left:2473.5px;top:815.2px;font-size:16.1px;color:#232833;font-weight:400;">0</div>
<div class="r" style="left:306px;top:843px;width:932px;height:41px;background:#e3e7f0"></div>
<div class="r" style="left:306px;top:843px;width:2215px;height:1px;background:#eeeeee"></div>
<div class="t" style="left:315.4px;top:855.9px;font-size:16.4px;color:#232833;font-weight:400;">mt.vh.greengroup-Central</div>
<div class="t" style="left:665.0px;top:856.2px;font-size:16.1px;color:#232833;font-weight:400;">greencity-Five Star City</div>
<div class="t" style="left:1015.2px;top:856.2px;font-size:16.1px;color:#232833;font-weight:400;">baove.greencity2-Security</div>
<div class="t" style="left:1248.5px;top:856.2px;font-size:16.1px;color:#232833;font-weight:400;">0</div>
<div class="t" style="left:1423.5px;top:856.2px;font-size:16.1px;color:#232833;font-weight:400;">0</div>
<div class="t" style="left:1598.5px;top:856.2px;font-size:16.1px;color:#232833;font-weight:400;">0</div>
<div class="t" style="left:1773.5px;top:856.2px;font-size:16.1px;color:#232833;font-weight:400;">0</div>
<div class="t" style="left:1948.5px;top:856.2px;font-size:16.1px;color:#232833;font-weight:400;">0</div>
<div class="t" style="left:2123.5px;top:856.2px;font-size:16.1px;color:#232833;font-weight:400;">0</div>
<div class="t" style="left:2298.5px;top:856.2px;font-size:16.1px;color:#232833;font-weight:400;">0</div>
<div class="t" style="left:2473.5px;top:856.2px;font-size:16.1px;color:#232833;font-weight:400;">0</div>
<div class="r" style="left:306px;top:884px;width:932px;height:41px;background:#e3e7f0"></div>
<div class="r" style="left:306px;top:884px;width:2215px;height:1px;background:#eeeeee"></div>
<div class="t" style="left:315.4px;top:896.9px;font-size:16.4px;color:#232833;font-weight:400;">mt.vh.greengroup-Central</div>
<div class="t" style="left:665.0px;top:897.2px;font-size:16.1px;color:#232833;font-weight:400;">greencity-Five Star City</div>
<div class="t" style="left:1015.2px;top:897.2px;font-size:16.1px;color:#232833;font-weight:400;">BPMKT-Housekeeping</div>
<div class="t" style="left:1248.5px;top:897.2px;font-size:16.1px;color:#232833;font-weight:400;">0</div>
<div class="t" style="left:1423.5px;top:897.2px;font-size:16.1px;color:#232833;font-weight:400;">0</div>
<div class="t" style="left:1598.5px;top:897.2px;font-size:16.1px;color:#232833;font-weight:400;">0</div>
<div class="t" style="left:1773.5px;top:897.2px;font-size:16.1px;color:#232833;font-weight:400;">0</div>
<div class="t" style="left:1948.5px;top:897.2px;font-size:16.1px;color:#232833;font-weight:400;">0</div>
<div class="t" style="left:2123.5px;top:897.2px;font-size:16.1px;color:#232833;font-weight:400;">0</div>
<div class="t" style="left:2298.5px;top:897.2px;font-size:16.1px;color:#232833;font-weight:400;">0</div>
<div class="t" style="left:2473.5px;top:897.2px;font-size:16.1px;color:#232833;font-weight:400;">0</div>
<div class="r" style="left:306px;top:925px;width:932px;height:41px;background:#e3e7f0"></div>
<div class="r" style="left:306px;top:925px;width:2215px;height:1px;background:#eeeeee"></div>
<div class="t" style="left:315.4px;top:937.9px;font-size:16.4px;color:#232833;font-weight:400;">mt.vh.greengroup-Central</div>
<div class="t" style="left:665.0px;top:938.2px;font-size:16.1px;color:#232833;font-weight:400;">greencity-Five Star City</div>
<div class="t" style="left:1015.2px;top:938.2px;font-size:16.1px;color:#232833;font-weight:400;">kythuat.greencity-Engineer</div>
<div class="t" style="left:1248.5px;top:938.2px;font-size:16.1px;color:#232833;font-weight:400;">0</div>
<div class="t" style="left:1423.5px;top:938.2px;font-size:16.1px;color:#232833;font-weight:400;">0</div>
<div class="t" style="left:1598.5px;top:938.2px;font-size:16.1px;color:#232833;font-weight:400;">0</div>
<div class="t" style="left:1773.5px;top:938.2px;font-size:16.1px;color:#232833;font-weight:400;">0</div>
<div class="t" style="left:1948.5px;top:938.2px;font-size:16.1px;color:#232833;font-weight:400;">0</div>
<div class="t" style="left:2123.5px;top:938.2px;font-size:16.1px;color:#232833;font-weight:400;">0</div>
<div class="t" style="left:2298.5px;top:938.2px;font-size:16.1px;color:#232833;font-weight:400;">0</div>
<div class="t" style="left:2473.5px;top:938.2px;font-size:16.1px;color:#232833;font-weight:400;">0</div>
<div class="r" style="left:306px;top:966px;width:932px;height:41px;background:#e3e7f0"></div>
<div class="r" style="left:306px;top:966px;width:2215px;height:1px;background:#eeeeee"></div>
<div class="t" style="left:315.4px;top:978.9px;font-size:16.4px;color:#232833;font-weight:400;">mt.vh.greengroup-Central</div>
<div class="t" style="left:665.0px;top:979.2px;font-size:16.1px;color:#232833;font-weight:400;">greencity-Five Star City</div>
<div class="t" style="left:1015.2px;top:979.2px;font-size:16.1px;color:#232833;font-weight:400;">greencity-Five Star City</div>
<div class="t" style="left:1248.5px;top:979.2px;font-size:16.1px;color:#232833;font-weight:400;">0</div>
<div class="t" style="left:1423.5px;top:979.2px;font-size:16.1px;color:#232833;font-weight:400;">0</div>
<div class="t" style="left:1598.5px;top:979.2px;font-size:16.1px;color:#232833;font-weight:400;">0</div>
<div class="t" style="left:1773.5px;top:979.2px;font-size:16.1px;color:#232833;font-weight:400;">0</div>
<div class="t" style="left:1948.5px;top:979.2px;font-size:16.1px;color:#232833;font-weight:400;">0</div>
<div class="t" style="left:2123.5px;top:979.2px;font-size:16.1px;color:#232833;font-weight:400;">0</div>
<div class="t" style="left:2298.5px;top:979.2px;font-size:16.1px;color:#232833;font-weight:400;">0</div>
<div class="t" style="left:2473.5px;top:979.2px;font-size:16.1px;color:#232833;font-weight:400;">0</div>
<div class="r" style="left:306px;top:1007px;width:932px;height:41px;background:#e3e7f0"></div>
<div class="r" style="left:306px;top:1007px;width:2215px;height:1px;background:#eeeeee"></div>
<div class="t" style="left:315.4px;top:1019.9px;font-size:16.4px;color:#232833;font-weight:400;">mn.vh.greengroup-Southern</div>
<div class="t" style="left:665.0px;top:1020.2px;font-size:16.1px;color:#232833;font-weight:400;">greencity-Green City</div>
<div class="t" style="left:1015.2px;top:1020.2px;font-size:16.1px;color:#232833;font-weight:400;">kt.greencity-Engineer</div>
<div class="t" style="left:1248.5px;top:1020.2px;font-size:16.1px;color:#232833;font-weight:400;">777</div>
<div class="t" style="left:1423.5px;top:1020.2px;font-size:16.1px;color:#232833;font-weight:400;">0</div>
<div class="t" style="left:1598.5px;top:1020.2px;font-size:16.1px;color:#232833;font-weight:400;">777</div>
<div class="t" style="left:1773.5px;top:1020.2px;font-size:16.1px;color:#232833;font-weight:400;">0</div>
<div class="t" style="left:1948.5px;top:1020.2px;font-size:16.1px;color:#232833;font-weight:400;">0</div>
<div class="t" style="left:2123.5px;top:1020.2px;font-size:16.1px;color:#232833;font-weight:400;">0</div>
<div class="t" style="left:2298.5px;top:1020.2px;font-size:16.1px;color:#232833;font-weight:400;">0</div>
<div class="t" style="left:2473.5px;top:1020.2px;font-size:16.1px;color:#232833;font-weight:400;">777</div>
<div class="r" style="left:306px;top:1048px;width:932px;height:41px;background:#e3e7f0"></div>
<div class="r" style="left:306px;top:1048px;width:2215px;height:1px;background:#eeeeee"></div>
<div class="t" style="left:315.4px;top:1060.9px;font-size:16.4px;color:#232833;font-weight:400;">mn.vh.greengroup-Southern</div>
<div class="t" style="left:665.0px;top:1061.2px;font-size:16.1px;color:#232833;font-weight:400;">greencity-Green City</div>
<div class="t" style="left:1015.2px;top:1061.2px;font-size:16.1px;color:#232833;font-weight:400;">AT-Security</div>
<div class="t" style="left:1248.5px;top:1061.2px;font-size:16.1px;color:#232833;font-weight:400;">0</div>
<div class="t" style="left:1423.5px;top:1061.2px;font-size:16.1px;color:#232833;font-weight:400;">0</div>
<div class="t" style="left:1598.5px;top:1061.2px;font-size:16.1px;color:#232833;font-weight:400;">0</div>
<div class="t" style="left:1773.5px;top:1061.2px;font-size:16.1px;color:#232833;font-weight:400;">0</div>
<div class="t" style="left:1948.5px;top:1061.2px;font-size:16.1px;color:#232833;font-weight:400;">0</div>
<div class="t" style="left:2123.5px;top:1061.2px;font-size:16.1px;color:#232833;font-weight:400;">0</div>
<div class="t" style="left:2298.5px;top:1061.2px;font-size:16.1px;color:#232833;font-weight:400;">0</div>
<div class="t" style="left:2473.5px;top:1061.2px;font-size:16.1px;color:#232833;font-weight:400;">0</div>
<div class="r" style="left:306px;top:1089px;width:932px;height:41px;background:#e3e7f0"></div>
<div class="r" style="left:306px;top:1089px;width:2215px;height:1px;background:#eeeeee"></div>
<div class="t" style="left:315.4px;top:1101.9px;font-size:16.4px;color:#232833;font-weight:400;">mn.vh.greengroup-Southern</div>
<div class="t" style="left:665.0px;top:1102.2px;font-size:16.1px;color:#232833;font-weight:400;">greencity-Green City</div>
<div class="t" style="left:1015.2px;top:1102.2px;font-size:16.1px;color:#232833;font-weight:400;">cx.greencity-Landscaping</div>
<div class="t" style="left:1248.5px;top:1102.2px;font-size:16.1px;color:#232833;font-weight:400;">36</div>
<div class="t" style="left:1423.5px;top:1102.2px;font-size:16.1px;color:#232833;font-weight:400;">1</div>
<div class="t" style="left:1598.5px;top:1102.2px;font-size:16.1px;color:#232833;font-weight:400;">37</div>
<div class="t" style="left:1773.5px;top:1102.2px;font-size:16.1px;color:#232833;font-weight:400;">0</div>
<div class="t" style="left:1948.5px;top:1102.2px;font-size:16.1px;color:#232833;font-weight:400;">0</div>
<div class="t" style="left:2123.5px;top:1102.2px;font-size:16.1px;color:#232833;font-weight:400;">0</div>
<div class="t" style="left:2298.5px;top:1102.2px;font-size:16.1px;color:#232833;font-weight:400;">0</div>
<div class="t" style="left:2473.5px;top:1102.2px;font-size:16.1px;color:#232833;font-weight:400;">37</div>
<div class="r" style="left:306px;top:1130px;width:2215px;height:1px;background:#eeeeee"></div>
<div class="r" style="left:655px;top:720px;width:1px;height:410px;background:#eef0f3"></div>
<div class="r" style="left:1005px;top:720px;width:1px;height:410px;background:#eef0f3"></div>
<div class="r" style="left:1413px;top:720px;width:1px;height:410px;background:#eeeeee"></div>
<div class="r" style="left:1588px;top:720px;width:1px;height:410px;background:#eeeeee"></div>
<div class="r" style="left:1763px;top:720px;width:1px;height:410px;background:#eeeeee"></div>
<div class="r" style="left:1938px;top:720px;width:1px;height:410px;background:#eeeeee"></div>
<div class="r" style="left:2113px;top:720px;width:1px;height:410px;background:#eeeeee"></div>
<div class="r" style="left:2288px;top:720px;width:1px;height:410px;background:#eeeeee"></div>
<div class="r" style="left:2463px;top:720px;width:1px;height:410px;background:#eeeeee"></div>
<div class="r" style="left:2507px;top:600px;width:15px;height:530px;background:linear-gradient(90deg,rgba(0,0,0,0),rgba(0,0,0,0.07))"></div>
<div class="r" style="left:2522px;top:514px;width:23px;height:700px;background:#f8f9fb"></div>
<div class="r" style="left:309px;top:1134px;width:1689px;height:9.5px;background:#b9b8be;border-radius:5px"></div>
<div class="r" style="left:2000.4px;top:1166.5px;width:43px;height:44px;background:#fff;border:1px solid #dfe4ee;border-radius:5px"></div>
<div class="r" style="left:2112.4px;top:1166.5px;width:43px;height:44px;background:#fff;border:1px solid #dfe4ee;border-radius:5px"></div>
<div class="r" style="left:2168.2px;top:1166.5px;width:43px;height:44px;background:#fff;border:1px solid #dfe4ee;border-radius:5px"></div>
<div class="r" style="left:2056.5px;top:1166.5px;width:43px;height:44px;background:#fff;border:1.5px solid #0012b8;border-radius:5px"></div>
<div class="r" style="left:2233.4px;top:1166.5px;width:117px;height:44px;background:#fff;border:1px solid #dfe4ee;border-radius:5px"></div>
<div class="r" style="left:2401.3px;top:1166.5px;width:56px;height:44px;background:#fff;border:1px solid #dfe4ee;border-radius:5px"></div>
<div class="r" style="left:2545px;top:72px;width:14px;height:1114px;background:#fdfdfd"></div>
<div class="r" style="left:2548px;top:75px;width:10px;height:511px;background:#bab9bf;border-radius:5px"></div>
<svg class="r" style="left:2017px;top:1183px" width="12" height="10" viewBox="0 0 12 10"><path d="M8 0 L3 6" stroke="#555b66" stroke-width="1.4"/></svg>
<div class="t" style="left:2075.0px;top:1182.8px;font-size:16px;color:#0012b8;font-weight:400;">1</div>
<div class="t" style="left:2131.0px;top:1182.8px;font-size:16px;color:#2b303b;font-weight:400;">2</div>
<svg class="r" style="left:2185px;top:1183px" width="12" height="10" viewBox="0 0 12 10"><path d="M3 0 L8 6" stroke="#555b66" stroke-width="1.4"/></svg>
<div class="t" style="left:2251.0px;top:1182.8px;font-size:16px;color:#2b303b;font-weight:400;">10 / trang</div>
<svg class="r" style="left:2332px;top:1184px" width="12" height="10" viewBox="0 0 12 10"><path d="M1.5 1.5 L6 8 L10.5 1.5" fill="none" stroke="#5a606c" stroke-width="1.2"/></svg>
<div class="t" style="left:2362.0px;top:1182.8px;font-size:16px;color:#2b303b;font-weight:400;">Đi tới</div>
<div class="t" style="left:2468.0px;top:1182.8px;font-size:16px;color:#2b303b;font-weight:400;">Trang</div>
<div class="r" style="left:2479px;top:1101px;width:90px;height:70px;background:#f9f9f9;box-shadow:0 0 5px 1px rgba(0,0,0,0.25);border-radius:3px"></div>
<svg class="r" style="left:2476px;top:1096px" width="83" height="60" viewBox="0 0 83 60"><path d="M23.2 33.7 A21.3 21.3 0 0 1 44.5 12.4 L44.5 23.2 A10.5 10.5 0 0 0 34 33.7 Z" fill="#4a8af4"/><path d="M27 12.8 L31.5 17.5 L36 14 Z" fill="#f9f9f9"/><path d="M44.5 12.4 A21.3 21.3 0 0 1 60.7 20.9 L65.1 16.9 L65.1 33.7 L47.9 33.7 L52.6 29 A10.5 10.5 0 0 0 44.5 23.2 Z" fill="#1c3aa9"/><path d="M60.3 47.5 A21.3 21.3 0 0 1 27.3 48.3 L22.9 51.3 L22.9 34.1 L39.8 34.1 L35.1 39.1 A10.5 10.5 0 0 0 53.3 40.5 Z" fill="#ababab"/></svg>
<div class="t" style="left:2487.0px;top:1155.5px;font-size:9.4px;color:#555;font-weight:400;">Privacy - Terms</div>
</div></body></html>
